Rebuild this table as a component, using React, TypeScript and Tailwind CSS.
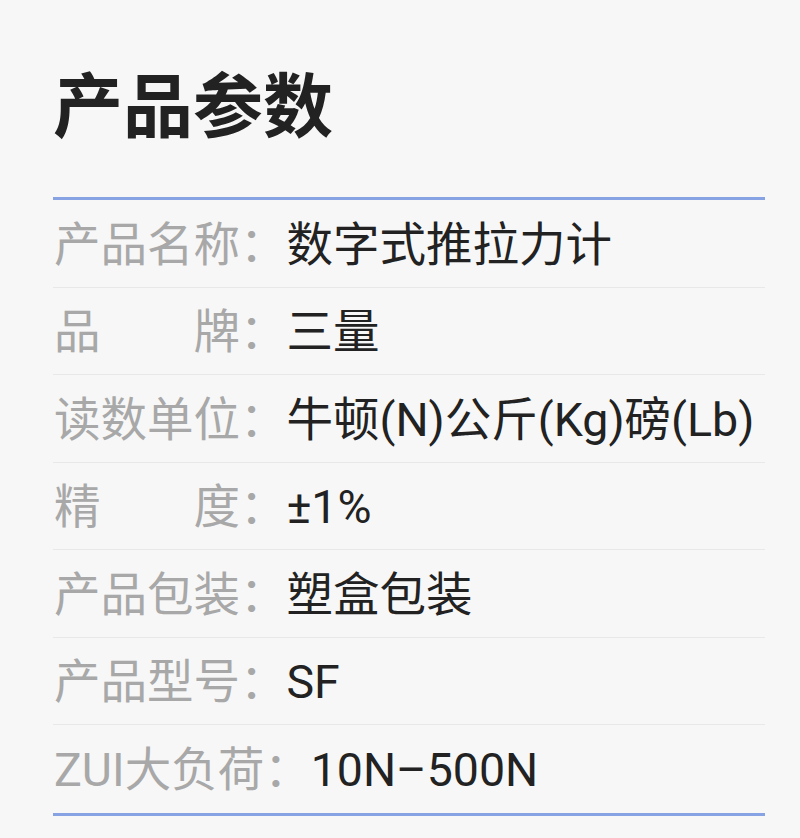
import React from "react";

const rows: { label: string; value: string }[] = [
  { label: "产品名称：", value: "数字式推拉力计" },
  { label: "品　　牌：", value: "三量" },
  { label: "读数单位：", value: "牛顿(N)公斤(Kg)磅(Lb)" },
  { label: "精　　度：", value: "±1%" },
  { label: "产品包装：", value: "塑盒包装" },
  { label: "产品型号：", value: "SF" },
  { label: "ZUI大负荷：", value: "10N–500N" },
];

export default function App() {
  return (
    <div
      className="min-h-[838px] w-[800px] bg-[#f7f7f7] pl-[53px] pr-[35px]"
      style={{ fontFamily: '"Roboto", "Noto Sans CJK SC", sans-serif' }}
    >
      {/* 标题 */}
      <h1 className="pt-[73px] text-[70px] leading-[70px] font-bold text-[#222222]">
        产品参数
      </h1>

      {/* 参数表 */}
      <div className="mt-[54px] border-t-[3px] border-b-[3px] border-[#87a3e3]">
        {rows.map((row, i) => (
          <div
            key={row.label}
            className={
              "flex h-[87.5px] items-center pl-[1px] pt-[3px] text-[46.5px] leading-[46px] " +
              (i < rows.length - 1 ? "border-b border-[#e8e8e8]" : "")
            }
          >
            <span className="text-[#a8a8a8] whitespace-pre">{row.label}</span>
            <span className="text-[#222222] whitespace-pre">{row.value}</span>
          </div>
        ))}
      </div>
    </div>
  );
}
